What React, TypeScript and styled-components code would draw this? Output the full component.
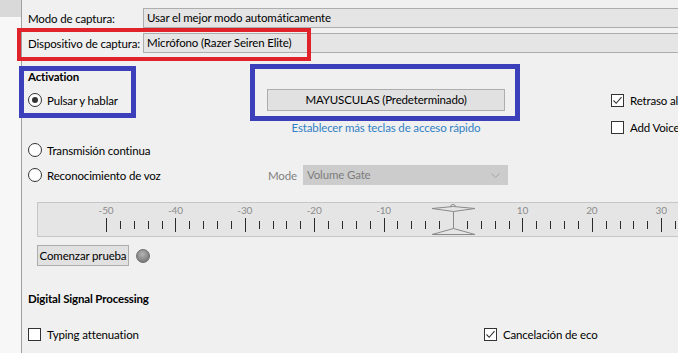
import React from "react";
import styled, { createGlobalStyle } from "styled-components";

const GlobalStyle = createGlobalStyle`
  html, body {
    margin: 0;
    padding: 0;
    background: #f0f0f0;
    overflow: hidden;
  }
  body {
    font-family: Lato, "Segoe UI", sans-serif;
    font-size: 11.5px;
    letter-spacing: -0.15px;
    color: #000;
  }
`;

const Window = styled.div`
  position: relative;
  display: flex;
  width: 678px;
  height: 353px;
  overflow: hidden;
`;

const Sidebar = styled.div`
  width: 21px;
  flex-shrink: 0;
  background: #f7f7f7;
  border-right: 1px solid #a0a0a0;
`;

const SidebarTab = styled.div`
  height: 17px;
  background: #d9d9d9;
`;

const Panel = styled.div`
  flex-shrink: 0;
  width: 720px;
  padding: 8px 0 0 6px;
  box-sizing: border-box;
  display: flex;
  flex-direction: column;
  white-space: nowrap;
`;

const FieldRow = styled.div`
  display: flex;
  align-items: center;
  height: 20px;
  margin-bottom: 5px;
`;

const FieldLabel = styled.div`
  width: 115px;
  flex-shrink: 0;
`;

const Combo = styled.div<{ $disabled?: boolean }>`
  position: relative;
  flex: ${(p) => (p.$disabled ? "none" : "1")};
  width: ${(p) => (p.$disabled ? "205px" : "auto")};
  height: 20px;
  box-sizing: border-box;
  border: 1px solid ${(p) => (p.$disabled ? "#cccccc" : "#adadad")};
  background: ${(p) => (p.$disabled ? "#cccccc" : "#e5e5e5")};
  color: ${(p) => (p.$disabled ? "#7d7d7d" : "#000")};
  padding-left: 3px;
  line-height: 18px;
`;

const Chevron = styled.svg`
  position: absolute;
  right: 7px;
  top: 7px;
`;

const SectionTitle = styled.div<{ $top: number }>`
  font-weight: bold;
  line-height: 16px;
  margin-top: ${(p) => p.$top}px;
`;

const OptionRow = styled.div<{ $top: number; $height?: number }>`
  display: flex;
  align-items: center;
  height: ${(p) => p.$height ?? 20}px;
  margin-top: ${(p) => p.$top}px;
`;

const Option = styled.label<{ $width?: number; $offset?: number }>`
  display: flex;
  align-items: center;
  flex-shrink: 0;
  width: ${(p) => (p.$width ? `${p.$width}px` : "auto")};
  margin-left: ${(p) => p.$offset ?? 0}px;
`;

const Radio = styled.span<{ $checked?: boolean }>`
  position: relative;
  width: 14px;
  height: 14px;
  box-sizing: border-box;
  border: 1px solid #333;
  border-radius: 50%;
  background: #fff;
  margin-right: 5px;
  &::after {
    content: "";
    display: ${(p) => (p.$checked ? "block" : "none")};
    position: absolute;
    left: 3px;
    top: 3px;
    width: 6px;
    height: 6px;
    border-radius: 50%;
    background: #333;
  }
`;

const CheckBox = styled.span`
  display: flex;
  align-items: center;
  justify-content: center;
  width: 13px;
  height: 13px;
  box-sizing: border-box;
  border: 1px solid #333;
  background: #fff;
  margin-right: 6px;
`;

const HotkeyButton = styled.div`
  width: 238px;
  height: 22px;
  flex-shrink: 0;
  box-sizing: border-box;
  border: 1px solid #adadad;
  background: #e1e1e1;
  text-align: center;
  line-height: 20px;
`;

const LinkText = styled.div`
  width: 238px;
  flex-shrink: 0;
  text-align: center;
  color: #3281c4;
`;

const ModeLabel = styled.span`
  color: #808080;
  margin-right: 6px;
`;

const Meter = styled.div`
  position: relative;
  margin: 17px 0 0 9px;
  height: 35px;
  box-sizing: border-box;
  border: 1px solid #c6c6c6;
  background: #e5e5e5;
`;

const Scale = styled.svg`
  display: block;
`;

const TestRow = styled.div`
  display: flex;
  align-items: center;
  margin: 8px 0 0 9px;
`;

const TestButton = styled.div`
  width: 92px;
  height: 21px;
  box-sizing: border-box;
  border: 1px solid #adadad;
  background: #e1e1e1;
  text-align: center;
  line-height: 19px;
`;

const Led = styled.div`
  width: 14px;
  height: 14px;
  margin-left: 7px;
  border-radius: 50%;
  box-sizing: border-box;
  border: 1px solid #6e6e6e;
  background: radial-gradient(circle at 45% 35%, #b4b4b4 0%, #8a8a8a 55%, #666 100%);
`;

const Annotation = styled.div<{ $color: string; $thick: number }>`
  position: absolute;
  box-sizing: border-box;
  border: ${(p) => p.$thick}px solid ${(p) => p.$color};
  pointer-events: none;
`;

const Check = () => (
  <svg width="11" height="11" viewBox="0 0 11 11">
    <path d="M1.5 5.5 L4.2 8.3 L9.5 2.2" fill="none" stroke="#333" strokeWidth="1.1" />
  </svg>
);

const PX_PER_DB = 6.94;
const ZERO_X = 415;

const MeterScale = () => {
  const ticks: number[] = [];
  for (let v = -50; v <= 34; v += 2) ticks.push(v);
  const labels = [-50, -40, -30, -20, -10, 10, 20, 30];
  return (
    <Scale width="700" height="33">
      {labels.map((v) => (
        <text
          key={`l${v}`}
          x={ZERO_X + v * PX_PER_DB}
          y="11"
          fontSize="10"
          fill="#8c8c8c"
          textAnchor="middle"
          fontFamily="Lato, sans-serif"
        >
          {v}
        </text>
      ))}
      {ticks
        .filter((v) => v !== 0)
        .map((v) => {
          const x = Math.round(ZERO_X + v * PX_PER_DB) + 0.5;
          const major = v % 10 === 0;
          return (
            <line
              key={`t${v}`}
              x1={x}
              x2={x}
              y1={major ? 15 : 18}
              y2={major ? 29 : 26}
              stroke="#2b2b2b"
              strokeWidth="1"
            />
          );
        })}
      <g stroke="#8a8a8a" strokeWidth="1" fill="#e5e5e5">
        <path d="M412.5 4 A2.5 2.5 0 0 1 417.5 4" fill="none" />
        <polygon points="394,5.5 415.5,3.5 437,5.5 415.5,8.5" />
        <line x1="415.5" x2="415.5" y1="8.5" y2="26" />
        <polygon points="394,31.5 415.5,25.5 437,31.5" />
      </g>
    </Scale>
  );
};

export default function App() {
  return (
    <>
      <GlobalStyle />
      <Window>
        <Sidebar>
          <SidebarTab />
        </Sidebar>
        <Panel>
          <FieldRow>
            <FieldLabel>Modo de captura:</FieldLabel>
            <Combo>Usar el mejor modo automáticamente</Combo>
          </FieldRow>
          <FieldRow>
            <FieldLabel>Dispositivo de captura:</FieldLabel>
            <Combo>Micrófono (Razer Seiren Elite)</Combo>
          </FieldRow>

          <SectionTitle $top={11}>Activation</SectionTitle>
          <OptionRow $top={4} $height={22}>
            <Option $width={239}>
              <Radio $checked />
              Pulsar y hablar
            </Option>
            <HotkeyButton>MAYUSCULAS (Predeterminado)</HotkeyButton>
            <Option $offset={106}>
              <CheckBox>
                <Check />
              </CheckBox>
              Retraso al
            </Option>
          </OptionRow>
          <OptionRow $top={6}>
            <Option $width={239} />
            <LinkText>Establecer más teclas de acceso rápido</LinkText>
            <Option $offset={106}>
              <CheckBox />
              Add Voice
            </Option>
          </OptionRow>
          <OptionRow $top={3}>
            <Option>
              <Radio />
              Transmisión continua
            </Option>
          </OptionRow>
          <OptionRow $top={5}>
            <Option $width={240}>
              <Radio />
              Reconocimiento de voz
            </Option>
            <ModeLabel>Mode</ModeLabel>
            <Combo $disabled>
              Volume Gate
              <Chevron width="9" height="6" viewBox="0 0 9 6">
                <path d="M0.5 0.5 L4.5 4.5 L8.5 0.5" fill="none" stroke="#a6a6a6" strokeWidth="1" />
              </Chevron>
            </Combo>
          </OptionRow>

          <Meter>
            <MeterScale />
          </Meter>

          <TestRow>
            <TestButton>Comenzar prueba</TestButton>
            <Led />
          </TestRow>

          <SectionTitle $top={25}>Digital Signal Processing</SectionTitle>
          <OptionRow $top={17}>
            <Option $width={456}>
              <CheckBox />
              Typing attenuation
            </Option>
            <Option>
              <CheckBox>
                <Check />
              </CheckBox>
              Cancelación de eco
            </Option>
          </OptionRow>
        </Panel>

        <Annotation $color="#e0232a" $thick={4} style={{ left: 17, top: 28, width: 294, height: 33 }} />
        <Annotation $color="#3c3fba" $thick={5} style={{ left: 19, top: 66, width: 117, height: 52 }} />
        <Annotation $color="#3c3fba" $thick={5} style={{ left: 250, top: 64, width: 270, height: 57 }} />
      </Window>
    </>
  );
}
